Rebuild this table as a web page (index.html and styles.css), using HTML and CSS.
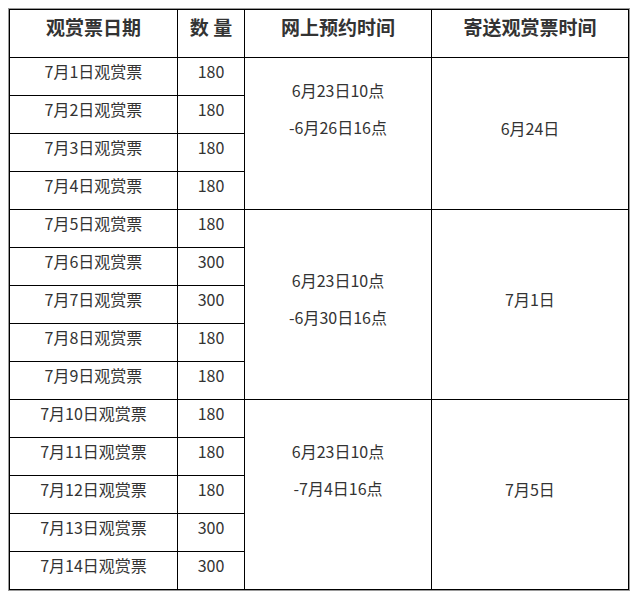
FILE: index.html
```html
<!DOCTYPE html>
<html lang="zh-CN">
<head>
<meta charset="utf-8">
<title>观赏票</title>
<link rel="stylesheet" href="styles.css">
</head>
<body>
<div class="frame">
<table class="tickets">
<colgroup>
<col class="c1"><col class="c2"><col class="c3"><col class="c4">
</colgroup>
<thead>
<tr class="head"><th>观赏票日期</th><th>数 量</th><th>网上预约时间</th><th>寄送观赏票时间</th></tr>
</thead>
<tbody>
<tr><td>7月1日观赏票</td><td>180</td><td rowspan="4" class="multi"><div class="ln">6月23日10点</div><div class="ln">-6月26日16点</div><div class="ln">&nbsp;</div></td><td rowspan="4">6月24日</td></tr>
<tr><td>7月2日观赏票</td><td>180</td></tr>
<tr><td>7月3日观赏票</td><td>180</td></tr>
<tr><td>7月4日观赏票</td><td>180</td></tr>
<tr><td>7月5日观赏票</td><td>180</td><td rowspan="5" class="multi"><div class="ln">6月23日10点</div><div class="ln">-6月30日16点</div></td><td rowspan="5">7月1日</td></tr>
<tr><td>7月6日观赏票</td><td>300</td></tr>
<tr><td>7月7日观赏票</td><td>300</td></tr>
<tr><td>7月8日观赏票</td><td>180</td></tr>
<tr><td>7月9日观赏票</td><td>180</td></tr>
<tr><td>7月10日观赏票</td><td>180</td><td rowspan="5" class="multi"><div class="ln">6月23日10点</div><div class="ln">-7月4日16点</div><div class="ln">&nbsp;</div></td><td rowspan="5">7月5日</td></tr>
<tr><td>7月11日观赏票</td><td>180</td></tr>
<tr><td>7月12日观赏票</td><td>180</td></tr>
<tr><td>7月13日观赏票</td><td>300</td></tr>
<tr><td>7月14日观赏票</td><td>300</td></tr>
</tbody>
</table>
</div>
</body>
</html>
```
FILE: styles.css
```css
html, body {
  background: #ffffff;
}
html {
  overflow: hidden;
}
body {
  margin: 8px 8px 0 8px;
  font-family: "Noto Sans CJK SC", "Noto Sans", sans-serif;
  color: #333333;
}
.frame {
  width: 622px;
  box-sizing: border-box;
  border: 1px solid #9a9a9a;
}
.tickets {
  width: 100%;
  table-layout: fixed;
  border-collapse: collapse;
  border: 1px solid #000;
}
.c1 { width: 168px; }
.c2 { width: 67px; }
.c3 { width: 187px; }
.tickets th,
.tickets td {
  border: 1px solid #000;
  padding: 0 0 12px 0;
  text-align: center;
  vertical-align: middle;
  font-size: 16px;
  line-height: 24px;
  font-weight: normal;
}
.tickets tbody tr {
  height: 38px;
}
.tickets .head {
  height: 48px;
}
.tickets th {
  font-size: 19px;
  font-weight: bold;
  padding-bottom: 14px;
}
.ln {
  line-height: 37px;
}
```
